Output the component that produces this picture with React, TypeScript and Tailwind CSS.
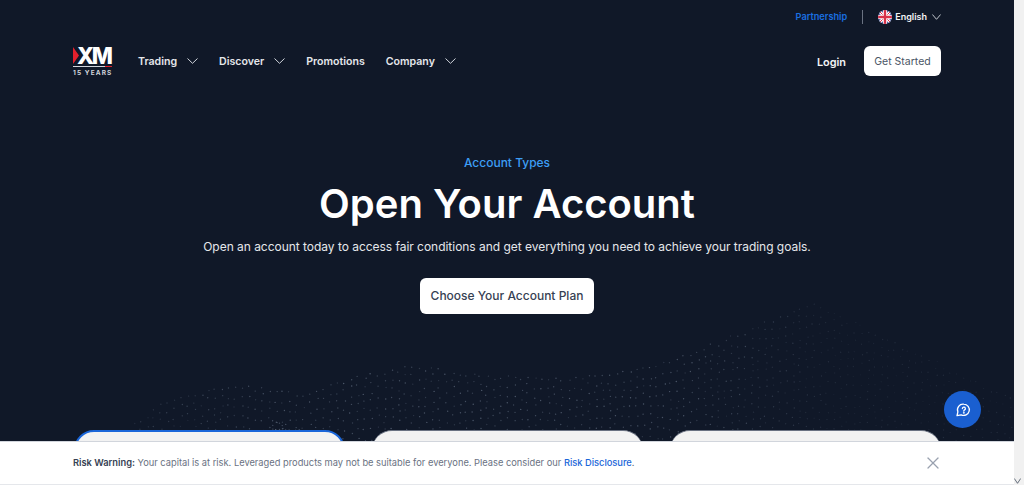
import { X } from 'lucide-react';

const ridge: [number, number][] = [
  [130, 425], [159, 403], [227, 383], [300, 393], [348, 377], [411, 365], [470, 373],
  [542, 378], [615, 373], [664, 360], [712, 343], [761, 323], [810, 303], [860, 325],
  [900, 345], [1014, 400],
];

function ridgeAt(x: number) {
  for (let i = 0; i < ridge.length - 1; i++) {
    const [x0, y0] = ridge[i];
    const [x1, y1] = ridge[i + 1];
    if (x >= x0 && x <= x1) return y0 + ((x - x0) / (x1 - x0)) * (y1 - y0);
  }
  return 440;
}

function buildDots() {
  const dots: { x: number; y: number; o: number }[] = [];
  let seed = 7;
  const rand = () => {
    seed = (seed * 16807) % 2147483647;
    return seed / 2147483647;
  };
  for (let x = 132; x < 1012; x += 6.8) {
    const top = ridgeAt(x);
    for (let y = top + rand() * 5; y < 442; y += 6 + rand() * 6) {
      const edge = x < 300 ? 0.5 + (x - 130) / 340 : x > 680 ? Math.max(0.3, 1 - (x - 680) / 220) : 1;
      dots.push({ x: x + rand() * 3, y, o: (0.2 + rand() * 0.28) * edge });
    }
  }
  // denser streaks next to the first card
  for (let x = 272; x < 322; x += 3.4) {
    for (let k = 0; k < 3; k++) {
      dots.push({ x: x + rand(), y: 420 + (x - 272) * 0.3 + k * 4 + rand() * 5, o: 0.4 });
    }
  }
  return dots;
}

const dots = buildDots();

function Chevron({ width = 11, className = 'text-gray-300' }: { width?: number; className?: string }) {
  return (
    <svg width={width} height="6" viewBox="0 0 11 6" fill="none" stroke="currentColor" strokeWidth="1" preserveAspectRatio="none" className={className}>
      <path d="M0.5 0.5L5.5 5.3L10.5 0.5" />
    </svg>
  );
}

function Flag() {
  return (
    <svg width="14" height="14" viewBox="0 0 14 14" className="shrink-0">
      <defs>
        <clipPath id="flag-clip">
          <circle cx="7" cy="7" r="7" />
        </clipPath>
      </defs>
      <g clipPath="url(#flag-clip)">
        <rect width="14" height="14" fill="#2b3f8c" />
        <path d="M0 0L14 14M14 0L0 14" stroke="#fff" strokeWidth="3" />
        <path d="M0 0L14 14M14 0L0 14" stroke="#d8324a" strokeWidth="1" />
        <path d="M7 0V14M0 7H14" stroke="#fff" strokeWidth="4.4" />
        <path d="M7 0V14M0 7H14" stroke="#d8324a" strokeWidth="2.4" />
      </g>
    </svg>
  );
}

function Logo() {
  return (
    <div className="flex w-[39px] flex-col">
      <div className="flex h-[17px] items-center">
        <svg width="6" height="17" viewBox="0 0 6 17" className="shrink-0">
          <path d="M0 0L6 8.5L0 17Z" fill="#e3202c" />
        </svg>
        <span className="-ml-[2px] text-[22.5px] leading-[17px] font-extrabold tracking-[-2.4px] text-white">XM</span>
      </div>
      <div className="mt-[2px] flex h-px">
        <div className="w-[32px] bg-gray-300" />
        <div className="flex-1 bg-[#e3202c]" />
      </div>
      <span className="mt-[3px] text-[6.5px] leading-[6px] font-bold tracking-[1.1px] whitespace-nowrap text-gray-300">15 YEARS</span>
    </div>
  );
}

function NavItem({ label, chevron = true }: { label: string; chevron?: boolean }) {
  return (
    <div className="flex items-center gap-[10px]">
      <span className="pt-[2px] text-[10.6px] font-semibold text-gray-200">{label}</span>
      {chevron && <Chevron />}
    </div>
  );
}

function PlanCard({ active = false }: { active?: boolean }) {
  return (
    <div
      className={
        active
          ? 'h-[60px] rounded-t-[20px] border-2 border-[#1a66d9] bg-[#f2f2f2]'
          : 'h-[60px] rounded-t-[20px] border-t border-gray-500 bg-[#f2f2f2]'
      }
    />
  );
}

export default function App() {
  return (
    <div className="flex h-[485px] w-[1024px] overflow-hidden bg-white font-['Inter',sans-serif]">
      <div className="relative flex-1 overflow-hidden bg-[#101828]">
        <svg width="1014" height="485" className="absolute top-0 left-0">
          {dots.map((d, i) => (
            <circle key={i} cx={d.x} cy={d.y} r="0.7" fill="#94a3b8" opacity={d.o} />
          ))}
        </svg>

        <div className="relative mx-auto flex w-[868px] flex-col">
          <div className="flex h-[33px] items-center justify-end">
            <span className="text-[9.2px] font-semibold text-[#1a6fe0]">Partnership</span>
            <div className="mx-[15px] h-[14px] w-px bg-gray-500" />
            <Flag />
            <span className="mr-[5px] ml-[3px] text-[9px] font-semibold text-gray-100">English</span>
            <Chevron width={9} />
          </div>

          <div className="mt-[13px] flex h-[30px] items-center justify-between">
            <div className="flex items-center gap-[26px]">
              <Logo />
              <div className="flex items-center gap-[21px]">
                <NavItem label="Trading" />
                <NavItem label="Discover" />
                <NavItem label="Promotions" chevron={false} />
                <NavItem label="Company" />
              </div>
            </div>
            <div className="flex items-center gap-[18px]">
              <span className="pt-[2px] text-[10.9px] font-semibold text-gray-100">Login</span>
              <div className="flex h-[30px] w-[77px] items-center justify-center rounded-md bg-white pt-[2px] text-[10.5px] font-normal text-gray-600">
                Get Started
              </div>
            </div>
          </div>

          <div className="mt-[79px] flex flex-col items-center">
            <span className="text-[12px] leading-[16px] font-medium text-[#3d9ef5]">Account Types</span>
            <h1 className="mt-[8px] text-[40px] leading-[50px] font-semibold text-white">Open Your Account</h1>
            <p className="mt-[8px] text-[12px] leading-[20px] tracking-[-0.03px] text-gray-200">
              Open an account today to access fair conditions and get everything you need to achieve your trading goals.
            </p>
            <div className="mt-[21px] flex h-[36px] w-[174px] items-center justify-center rounded-md bg-white text-[12px] font-medium text-gray-700">
              Choose Your Account Plan
            </div>
          </div>

          <div className="mt-[116px] grid grid-cols-3 gap-[27px] pl-px">
            <PlanCard active />
            <PlanCard />
            <PlanCard />
          </div>
        </div>

        <div className="absolute top-[391px] left-[944px] flex h-[37px] w-[37px] items-center justify-center rounded-full bg-[#1a5fd0]">
          <svg width="16" height="16" viewBox="0 0 16 16" fill="none" stroke="white" strokeWidth="1.3" strokeLinejoin="round">
            <path d="M8.8 2.2a5.6 5.6 0 1 1-2.6 10.6L2 13.6l.9-3.7A5.6 5.6 0 0 1 8.8 2.2Z" />
            <path d="M7.4 6.6a1.5 1.5 0 1 1 2.2 1.3c-.5.3-.8.6-.8 1.1" strokeLinecap="round" />
            <circle cx="8.8" cy="10.8" r="0.3" fill="white" />
          </svg>
        </div>

        <div className="absolute top-[441px] left-0 flex h-[44px] w-full items-center justify-between border-t border-b border-t-gray-300 border-b-gray-200 bg-white pr-[71px] pl-[73px]">
          <p className="text-[9.3px] text-gray-500">
            <span className="font-semibold text-gray-700">Risk Warning:</span> Your capital is at risk. Leveraged products may not be suitable for everyone. Please consider our{' '}
            <span className="font-medium text-[#1a66d9]">Risk Disclosure</span>.
          </p>
          <X size={20} strokeWidth={1.5} className="text-gray-400" />
        </div>
      </div>

      <div className="flex w-[10px] flex-col justify-end bg-[#f1f1f1] pb-[1px]">
        <Chevron width={7} className="text-gray-600" />
      </div>
    </div>
  );
}
